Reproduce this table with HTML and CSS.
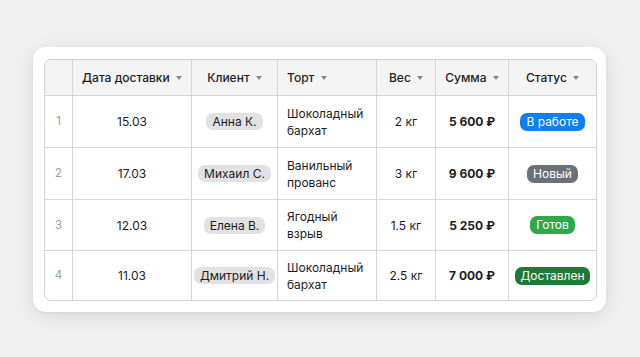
FILE: index.html
```html
<!DOCTYPE html>
<html lang="ru">
<head>
<meta charset="utf-8">
<link rel="stylesheet" href="styles.css">
</head>
<body>
<div class="card">
  <table class="grid">
    <colgroup>
      <col class="c-num"><col class="c-date"><col class="c-client"><col class="c-cake"><col class="c-weight"><col class="c-sum"><col class="c-status">
    </colgroup>
    <thead>
      <tr>
        <th></th>
        <th>Дата доставки <span class="caret"></span></th>
        <th>Клиент <span class="caret"></span></th>
        <th class="left">Торт <span class="caret"></span></th>
        <th>Вес <span class="caret"></span></th>
        <th>Сумма <span class="caret"></span></th>
        <th>Статус <span class="caret"></span></th>
      </tr>
    </thead>
    <tbody>
      <tr>
        <td class="num">1</td><td>15.03</td><td><span class="pill">Анна К.</span></td>
        <td class="left">Шоколадный<br>бархат</td><td>2 кг</td><td class="sum">5 600 ₽</td>
        <td><span class="status s-work">В работе</span></td>
      </tr>
      <tr>
        <td class="num">2</td><td>17.03</td><td><span class="pill">Михаил С.</span></td>
        <td class="left">Ванильный<br>прованс</td><td>3 кг</td><td class="sum">9 600 ₽</td>
        <td><span class="status s-new">Новый</span></td>
      </tr>
      <tr>
        <td class="num">3</td><td>12.03</td><td><span class="pill">Елена В.</span></td>
        <td class="left">Ягодный<br>взрыв</td><td>1.5 кг</td><td class="sum">5 250 ₽</td>
        <td><span class="status s-ready">Готов</span></td>
      </tr>
      <tr>
        <td class="num">4</td><td>11.03</td><td><span class="pill">Дмитрий Н.</span></td>
        <td class="left">Шоколадный<br>бархат</td><td>2.5 кг</td><td class="sum">7 000 ₽</td>
        <td><span class="status s-done">Доставлен</span></td>
      </tr>
    </tbody>
  </table>
</div>
</body>
</html>
```
FILE: styles.css
```css
* { box-sizing: border-box; }
html, body { margin: 0; padding: 0; }
body {
  width: 640px;
  height: 357px;
  background: #efefef;
  font-family: Inter, "Noto Sans", sans-serif;
  color: #1c1c1e;
  padding: 47px 0 0 33px;
}
.card {
  width: 573px;
  height: 265px;
  background: #fff;
  border-radius: 13px;
  padding: 12px 11px;
  box-shadow: 0 4px 18px rgba(0,0,0,0.09), 0 1px 3px rgba(0,0,0,0.05);
}
.grid {
  width: 551px;
  border-collapse: separate;
  border-spacing: 0;
  border: 1px solid #d2d2d2;
  border-radius: 7px;
  overflow: hidden;
  table-layout: fixed;
  font-size: 12px;
}
.c-num { width: 28px; }
.c-date { width: 119px; }
.c-client { width: 86px; }
.c-cake { width: 99px; }
.c-weight { width: 59px; }
.c-sum { width: 73px; }
.c-status { width: 87px; }
th, td {
  border-right: 1px solid #d6d6d6;
  border-bottom: 1px solid #d6d6d6;
  text-align: center;
  padding: 0;
  white-space: nowrap;
}
th:last-child, td:last-child { border-right: none; }
tbody tr:last-child td { border-bottom: none; }
th {
  height: 36px;
  background: #f4f4f5;
  font-weight: 500;
  font-size: 12px;
}
td { height: 52px; line-height: 17px; }
tbody tr:nth-child(3) td { height: 51px; }
tbody tr:nth-child(4) td { height: 49px; }
.left { text-align: left; padding-left: 9px; }
.num { color: #9a9a9a; font-size: 11.5px; }
.sum { font-weight: 700; }
.caret {
  display: inline-block;
  width: 0; height: 0;
  border-left: 3.5px solid transparent;
  border-right: 3.5px solid transparent;
  border-top: 4.5px solid #858585;
  margin-left: 3px;
  vertical-align: 2px;
}
.pill {
  display: inline-block;
  background: #e2e2e4;
  border-radius: 7px;
  padding: 0 6px;
  line-height: 17px;
}
.status {
  display: inline-block;
  color: #fff;
  border-radius: 7px;
  padding: 0 6px;
  line-height: 18px;
  font-size: 12px;
}
.s-work { background: #0f7ff2; }
.s-new { background: #6c7177; }
.s-ready { background: #2ea84b; }
.s-done { background: #1d7a35; }
```
